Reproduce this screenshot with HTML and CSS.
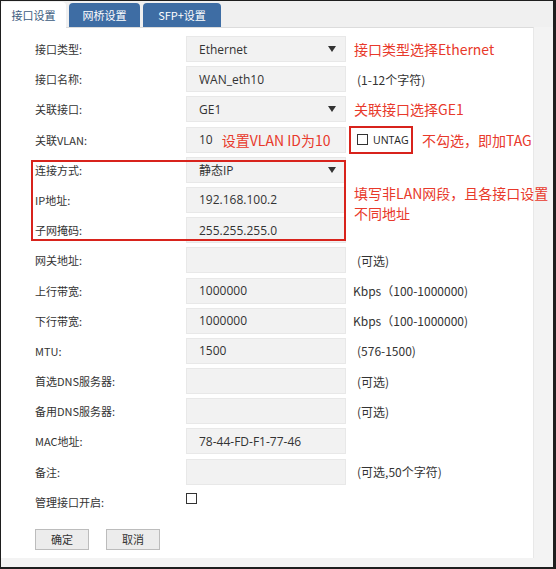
FILE: index.html
```html
<!DOCTYPE html>
<html lang="zh-CN">
<head>
<meta charset="utf-8">
<title>接口设置</title>
<link rel="stylesheet" href="styles.css">
</head>
<body>
<div class="frame">
  <div class="tabs">
    <div class="tab active">接口设置</div>
    <div class="tab t2">网桥设置</div>
    <div class="tab t3">SFP+设置</div>
  </div>
  <div class="panel">
    <div class="form">
      <div class="lbl">接口类型:</div>
      <div class="inp sel"><span>Ethernet</span><i class="arrow"></i></div>
      <div class="hint red">接口类型选择Ethernet</div>

      <div class="lbl">接口名称:</div>
      <div class="inp">WAN_eth10</div>
      <div class="hint paren">(1-12个字符)</div>

      <div class="lbl">关联接口:</div>
      <div class="inp sel"><span>GE1</span><i class="arrow"></i></div>
      <div class="hint red">关联接口选择GE1</div>

      <div class="lbl">关联VLAN:</div>
      <div class="inp"><span>10</span><span class="red inred">设置VLAN ID为10</span></div>
      <div class="hint vlan">
        <div class="untag"><i class="cb"></i><span>UNTAG</span></div>
        <span class="red">不勾选，即加TAG</span>
      </div>

      <div class="lbl">连接方式:</div>
      <div class="inp sel"><span>静态IP</span><i class="arrow"></i></div>

      <div class="lbl">IP地址:</div>
      <div class="inp">192.168.100.2</div>

      <div class="lbl">子网掩码:</div>
      <div class="inp">255.255.255.0</div>

      <div class="note red"><div>填写非LAN网段，且各接口设置</div><div>不同地址</div></div>

      <div class="lbl">网关地址:</div>
      <div class="inp"></div>
      <div class="hint paren">(可选)</div>

      <div class="lbl">上行带宽:</div>
      <div class="inp">1000000</div>
      <div class="hint">Kbps（100-1000000)</div>

      <div class="lbl">下行带宽:</div>
      <div class="inp">1000000</div>
      <div class="hint">Kbps（100-1000000)</div>

      <div class="lbl">MTU:</div>
      <div class="inp">1500</div>
      <div class="hint paren">(576-1500)</div>

      <div class="lbl">首选DNS服务器:</div>
      <div class="inp"></div>
      <div class="hint paren">(可选)</div>

      <div class="lbl">备用DNS服务器:</div>
      <div class="inp"></div>
      <div class="hint paren">(可选)</div>

      <div class="lbl">MAC地址:</div>
      <div class="inp">78-44-FD-F1-77-46</div>

      <div class="lbl">备注:</div>
      <div class="inp"></div>
      <div class="hint paren">(可选,50个字符)</div>

      <div class="lbl">管理接口开启:</div>
      <div class="chk"><i class="cb"></i></div>

      <div class="redbox"></div>
    </div>
    <div class="buttons">
      <div class="btn">确定</div>
      <div class="btn">取消</div>
    </div>
  </div>
</div>
</body>
</html>
```
FILE: styles.css
```css
html, body {
  margin: 0;
  padding: 0;
  background: #ffffff;
}

.frame {
  width: 556px;
  height: 569px;
  box-sizing: border-box;
  border-style: solid;
  border-color: #1e1e1e;
  border-width: 1px 3px 2px 1px;
  background: #f3f3f3;
  font-family: "Noto Sans CJK SC", "Open Sans", sans-serif;
  color: #333;
  overflow: hidden;
}

.tabs {
  height: 26px;
  display: flex;
  align-items: flex-end;
  gap: 3px;
  background: #f0f0f0;
}

.tab {
  height: 24px;
  box-sizing: border-box;
  border-radius: 4px 4px 0 0;
  background: #3e6da4;
  color: #ffffff;
  font-size: 11px;
  display: flex;
  align-items: center;
  justify-content: center;
}

.tab.active {
  width: 65px;
  height: 26px;
  background: #ffffff;
  color: #3b5b7d;
  position: relative;
  z-index: 1;
  margin-bottom: -1px;
}

.tab.t2 { width: 71px; }
.tab.t3 { width: 78px; }

.panel {
  width: 533px;
  height: 531px;
  box-sizing: border-box;
  background: #ffffff;
  border-top: 1px solid #dcdcdc;
  border-right: 1px solid #e8e8e8;
  padding: 8px 0 0 34px;
}

.form {
  position: relative;
  display: grid;
  grid-template-columns: 151px 160px auto;
  grid-auto-rows: 26px;
  row-gap: 4.2px;
}

.lbl {
  grid-column: 1;
  font-size: 11px;
  display: flex;
  align-items: center;
  white-space: nowrap;
}

.inp {
  grid-column: 2;
  box-sizing: border-box;
  background: #f2f2f2;
  border: 1px solid #e8e8e8;
  padding: 0 9px 0 12px;
  display: flex;
  align-items: center;
  font-family: "Open Sans", "Noto Sans CJK SC", sans-serif;
  font-size: 12px;
  color: #333;
  white-space: nowrap;
}

.inp.sel {
  justify-content: space-between;
}

.arrow {
  width: 0;
  height: 0;
  border-left: 4px solid transparent;
  border-right: 4px solid transparent;
  border-top: 6px solid #333;
}

.hint {
  grid-column: 3;
  display: flex;
  align-items: center;
  padding-left: 7px;
  font-size: 12px;
  white-space: nowrap;
}

.hint.paren {
  padding-left: 11px;
}

.red {
  color: #e8392b;
  font-family: "Noto Sans CJK SC", sans-serif;
  font-size: 14px;
}

.hint.red {
  padding-left: 8px;
}

.inred {
  margin-left: 9px;
}

.hint.vlan {
  padding-left: 3px;
  overflow: visible;
}

.untag {
  width: 64px;
  height: 28px;
  box-sizing: border-box;
  border: 2px solid #d8231c;
  display: flex;
  align-items: center;
  gap: 5px;
  padding-left: 6px;
  font-family: "Open Sans", sans-serif;
  font-size: 10.5px;
  font-weight: 500;
  color: #222;
  margin-right: 9px;
  flex-shrink: 0;
}

.cb {
  display: block;
  width: 11px;
  height: 11px;
  box-sizing: border-box;
  border: 1px solid #333;
  background: #fff;
}

.note {
  grid-column: 3;
  grid-row: 5 / span 3;
  align-self: start;
  margin-top: 26px;
  padding-left: 8px;
  line-height: 20px;
  white-space: nowrap;
}

.chk {
  grid-column: 2;
  padding-top: 4px;
}

.redbox {
  position: absolute;
  left: -4px;
  top: 124px;
  width: 315px;
  height: 81px;
  box-sizing: border-box;
  border: 2px solid #d8231c;
  pointer-events: none;
}

.buttons {
  display: flex;
  gap: 17px;
  margin-top: 14px;
}

.btn {
  width: 54px;
  height: 21px;
  box-sizing: border-box;
  background: #ececec;
  border: 1px solid #bcbcbc;
  font-size: 11px;
  display: flex;
  align-items: center;
  justify-content: center;
  color: #333;
}
```
